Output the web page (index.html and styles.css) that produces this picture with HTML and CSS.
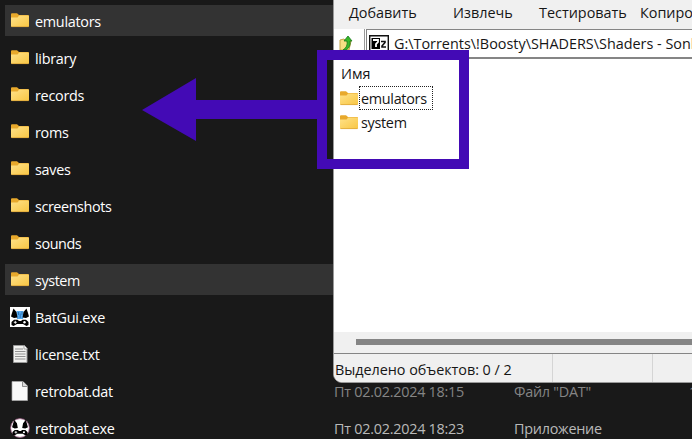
FILE: index.html
```
<!DOCTYPE html>
<html lang="ru">
<head>
<meta charset="utf-8">
<title>RetroBat</title>
<link rel="stylesheet" href="styles.css">
</head>
<body>
<svg class="defs" width="0" height="0">
  <defs>
    <linearGradient id="gold" x1="0" y1="0" x2="1" y2="1"><stop offset="0" stop-color="#ffe28a"/><stop offset="1" stop-color="#f8c643"/></linearGradient>
    <symbol id="folder" viewBox="0 0 18 15"><path d="M0 1.2Q0 .3 1 .3H6L8 2H17Q18 2 18 3V6H0Z" fill="#e8a92c"/><path d="M0 4.5H6.5L8.2 2.4H17Q18 2.4 18 3.4V13Q18 14 17 14H1Q0 14 0 13Z" fill="url(#gold)"/><path d="M.5 13.6H17.5" stroke="#dca63a" stroke-width=".8"/></symbol>
    <symbol id="bat" viewBox="0 0 20 20"><path d="M3.5 1.5L6.5 5L7.5 10.5L4 11L1 9.5L2 6ZM16.5 1.5L13.5 5L12.5 10.5L16 11L19 9.5L18 6Z"/><path d="M4 12.8H7.5L9 14H11L12.5 12.8H16L18.5 15V18L16.5 19L13 17H7L3.5 19L1.5 18V15Z"/><path d="M3.8 15.3H6.8M5.3 13.8V16.8" stroke="#fff" stroke-width=".9"/><circle cx="14.5" cy="15.3" r="1.2" fill="#fff"/></symbol>
  </defs>
</svg>
<div class="screen">
  <main class="files">
    <div class="row selected"><svg class="folder"><use href="#folder"/></svg><span class="name">emulators</span></div>
    <div class="row"><svg class="folder"><use href="#folder"/></svg><span class="name">library</span></div>
    <div class="row"><svg class="folder"><use href="#folder"/></svg><span class="name">records</span></div>
    <div class="row"><svg class="folder"><use href="#folder"/></svg><span class="name">roms</span></div>
    <div class="row"><svg class="folder"><use href="#folder"/></svg><span class="name">saves</span></div>
    <div class="row"><svg class="folder"><use href="#folder"/></svg><span class="name tight">screenshots</span></div>
    <div class="row"><svg class="folder"><use href="#folder"/></svg><span class="name tight">sounds</span></div>
    <div class="row selected"><svg class="folder"><use href="#folder"/></svg><span class="name tight">system</span></div>
    <div class="row"><svg class="app" viewBox="0 0 20 20"><path fill="#fff" d="M0 0H20V20H0Z"/><path d="M6.5 4H13.5L13 12H7Z" fill="#55a9ef"/><use href="#bat" width="20" height="20"/><path d="M8.5 5V8M10.2 6.5V11M12 4.5V8" stroke="#205e9f" stroke-width=".7"/></svg><span class="name">BatGui.exe</span></div>
    <div class="row"><svg class="doc" viewBox="0 0 20 20"><path d="M3.5 1.5H14L17 4.5V18.5H3.5Z" fill="#f1f1ef" stroke="#999"/><path d="M5 5H13M5 7.5H15.5M5 10H15.5M5 12.5H15.5M5 15H15.5" stroke="#929292"/><path d="M14 1V5H17.5" fill="#fff" stroke="#888" stroke-width=".7"/></svg><span class="name">license.txt</span></div>
    <div class="row"><svg class="doc" viewBox="0 0 20 20"><path d="M2 .5H13L17.5 5V19.5H2Z" fill="#f8f8f8" stroke="#aaa" stroke-width=".7"/><path d="M12.5 .5V5.5H17.5" fill="#ddd" stroke="#777" stroke-width=".8"/></svg><span class="name">retrobat.dat</span><span class="date">Пт 02.02.2024 18:15</span><span class="type">Файл "DAT"</span><span class="size">1</span></div>
    <div class="row"><svg class="app" viewBox="0 0 20 20"><circle cx="10" cy="10" r="9.4" fill="#fff" stroke="#98577f" stroke-width=".8"/><g transform="translate(1.2 .8) scale(.88)"><use href="#bat" width="20" height="20"/></g></svg><span class="name">retrobat.exe</span><span class="date bright">Пт 02.02.2024 18:23</span><span class="type bright">Приложение</span></div>
  </main>
  <section class="archive">
    <nav class="menu"><span class="add">Добавить</span><span class="extract">Извлечь</span><span class="test">Тестировать</span><span class="copy">Копиро</span></nav>
    <div class="address">
      <div class="up"><svg viewBox="0 0 14 16" width="14" height="16"><path d="M1 5L5 4L7 6H12L10 15H1Z" fill="#f6df83" stroke="#c4a447"/><path d="M4 15Q9 12 8 6H5L9 1L13 6H11Q12 12 7 15Z" fill="#39b728" stroke="#16791d" stroke-width=".8"/></svg></div>
      <div class="path"><svg viewBox="0 0 20 17" width="20" height="17"><path d="M.7 .7H19.3V16.3H.7Z" fill="#fff" stroke="#111" stroke-width="1.4"/><path d="M2.5 3H11V14H2.5Z"/><path d="M4 5H9V7L7 9V12" fill="none" stroke="#fff" stroke-width="1.8"/><path d="M12 6.5H16V7.5L13 11V12H17" fill="none" stroke="#111" stroke-width="1.6"/></svg><span class="path-text">G:\Torrents\!Boosty\SHADERS\Shaders - Sonk</span></div>
    </div>
    <div class="listing">
      <div class="heading">Имя</div>
      <div class="entry"><svg class="folder"><use href="#folder"/></svg><span class="entry-name focused">emulators</span></div>
      <div class="entry"><svg class="folder"><use href="#folder"/></svg><span class="entry-name">system</span></div>
    </div>
    <div class="scroll"><div class="thumb"></div></div>
    <footer class="status"><span class="summary">Выделено объектов: 0 / 2</span><span class="cell"></span><span class="cell"></span></footer>
  </section>
  <svg class="annotation" viewBox="0 0 692 439"><path d="M142 110L196 78V100H317V119H196V141Z" fill="#430ab5"/><path d="M322 55H464V164H322Z" fill="none" stroke="#430ab5" stroke-width="10"/></svg>
</div>
</body>
</html>
```
FILE: styles.css
```
* { box-sizing: border-box; }
body { margin: 0; overflow: hidden; background: #191919; color: #fff; font: 14.4px/20px "Open Sans", "Noto Sans", sans-serif; }
span, .heading { white-space: nowrap; }
.defs { position: absolute; }
.screen { position: relative; width: 692px; height: 439px; overflow: hidden; }
.files { display: flex; flex-direction: column; gap: 6px; padding: 5px 0 0 5px; }
.row { display: grid; grid-template-columns: 30px 299px 180px 175px 20px; align-items: center; height: 31px; flex: none; }
.selected { background: #333; }
.folder { width: 18px; height: 15px; margin-left: 6px; }
.app { width: 20px; height: 20px; margin-left: 5px; }
.doc { width: 20px; height: 20px; margin-left: 5px; }
.name { letter-spacing: -.28px; padding-top: 2px; }
.tight { letter-spacing: -.42px; }
.date, .type, .size { color: #858585; padding-top: 2px; letter-spacing: -.25px; }
.bright { color: #b9b9b9; }
.archive { position: absolute; left: 333px; top: -1px; width: 370px; height: 384px; display: flex; flex-direction: column; background: #fff; border: 1px solid #999; border-radius: 0 0 0 9px; color: #161616; overflow: hidden; }
.menu { display: grid; grid-template-columns: 104px 86px 101px 100px; height: 29px; flex: none; padding: 3px 0 0 15px; background: #f0f0f0; }
.address { display: flex; height: 30px; flex: none; }
.up { width: 31px; flex: none; border-right: 1px solid #999; padding: 6px 0 0 5px; }
.path { display: flex; align-items: center; gap: 5px; margin-left: 1px; width: 360px; height: 30px; padding-left: 2px; border: 1px solid #858585; border-bottom-width: 2px; flex: none; }
.path svg { flex: none; }
.listing { height: 273px; flex: none; padding-top: 5px; }
.heading { height: 22px; padding: 0 0 0 7px; }
.entry { display: flex; align-items: center; height: 24px; }
.listing .folder { margin-left: 6px; }
.entry-name { height: 24px; line-height: 23px; padding: 0 1px; margin-left: 1px; border: 1px solid transparent; letter-spacing: -.3px; }
.focused { width: 74px; border: 1px dotted #222; }
.scroll { height: 22px; flex: none; padding: 7px 0 0 22px; background: #f0f0f0; border-bottom: 1px solid #858585; }
.thumb { height: 6px; background: #858585; }
.status { display: flex; flex: 1; background: #f0f0f0; }
.summary { width: 219px; flex: none; padding: 6px 0 0 1px; border-right: 1px solid #d5d5d5; letter-spacing: -.04px; }
.cell { width: 100px; flex: none; border-right: 1px solid #d5d5d5; }
.annotation { position: absolute; inset: 0; width: 692px; height: 439px; }
```
